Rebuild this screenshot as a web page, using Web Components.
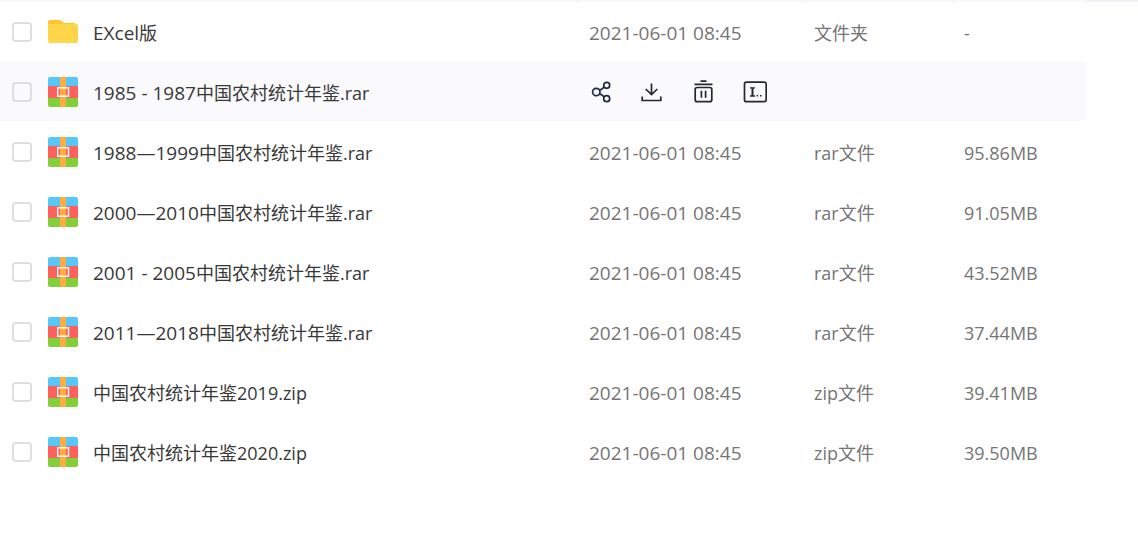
<!DOCTYPE html>
<html lang="zh-CN">
<head>
<meta charset="utf-8">
<title>文件列表</title>
<style>
body { margin: 0; background: #fff; font-family: "Open Sans", "Noto Sans CJK SC", sans-serif; font-size: 18px; line-height: 24px; color: #383838; }
</style>
</head>
<body>
<file-list></file-list>
<script>
class BaseElement extends HTMLElement {
  connectedCallback() {
    if (!this.shadowRoot) this.attachShadow({ mode: "open" }).innerHTML = this.render();
  }
}

class FileIcon extends BaseElement {
  render() {
    const folder = `<path d="M0 5V2a2 2 0 0 1 2-2h9c3 0 3 3 6 3h10v5H0z" fill="#ffc62b"/>
      <path d="M0 4h28a2 2 0 0 1 2 2v15a2 2 0 0 1-2 2H2a2 2 0 0 1-2-2z" fill="#ffd64a"/>`;
    const archive = `<path d="M2 0h26a2 2 0 0 1 2 2v7H0V2a2 2 0 0 1 2-2z" fill="#56c7f8"/>
      <path d="M0 9h30v12H0z" fill="#ff605c"/>
      <path d="M0 21h30v7a2 2 0 0 1-2 2H2a2 2 0 0 1-2-2z" fill="#82cf3a"/>
      <path d="M12 0h6v30h-6z" fill="#ffad41"/>
      <path d="M9.700 10.700h10.800v8.600H9.700z" fill="none" stroke="#fff" stroke-width="1.400"/>`;
    const isFolder = this.getAttribute("kind") === "folder";
    return `<style>:host{display:block;flex:none} svg{display:block}</style>
      <svg width="30" height="${isFolder ? 24 : 30}" viewBox="0 0 30 ${isFolder ? 24 : 30}" aria-hidden="true">${isFolder ? folder : archive}</svg>`;
  }
}
customElements.define("file-icon", FileIcon);

class RowActions extends BaseElement {
  render() {
    const icons = [
      ["分享", `<g stroke="#1d2b43"><circle cx="9.300" cy="12" r="3.700"/><circle cx="19.700" cy="5.300" r="3"/><circle cx="19.700" cy="18.700" r="3"/><path d="M12.500 9.700h1.600l3-2.600M12.500 14.300h1.600l3 2.600"/></g>`],
      ["下载", `<path d="M12.500 3.500v10.800M6.700 9l5.800 5.600L18.300 9M3.200 16.500v4h18.600v-4"/>`],
      ["删除", `<path d="M9.500 1.200h6M3.500 4.300h18" stroke-width="1.800"/><rect x="4.200" y="7.500" width="16.600" height="14.200" rx="2"/><path d="M10.400 10.800v7M14.600 10.800v7"/>`],
      ["重命名", `<rect x="1.500" y="2.200" width="21.700" height="19.500" rx="2"/><path d="M7 7.800h5M7 16h5" stroke-width="1.300"/><path d="M9.500 8v8" stroke-width="2"/><path d="M13.500 15.700h1.600M17 15.700h1.600" stroke-width="1.500"/>`]
    ];
    return `<style>
      :host{display:flex;gap:28px}
      button{border:0;padding:0;background:none;width:24px;height:24px;cursor:pointer}
      svg{display:block;fill:none;stroke:#25282e;stroke-width:1.700}
      </style>` + icons.map(([label, art]) =>
        `<button type="button" aria-label="${label}"><svg width="24" height="24" viewBox="0 0 24 24">${art}</svg></button>`).join("");
  }
}
customElements.define("row-actions", RowActions);

class FileName extends BaseElement {
  render() {
    return `<style>
      :host{display:flex;align-items:center;gap:15px;white-space:nowrap}
      div{padding-top:2px}
      ::slotted(span){font-size:19px}
      </style><file-icon kind="${this.getAttribute("kind")}"></file-icon><div><slot></slot></div>`;
  }
}
customElements.define("file-name", FileName);

class FileList extends BaseElement {
  render() {
    const files = [
      ["EXcel", "版", "文件夹", "-"],
      ["1985 - 1987", "中国农村统计年鉴.rar", "", "", true],
      ["1988—1999", "中国农村统计年鉴.rar", "rar文件", "95.86MB"],
      ["2000—2010", "中国农村统计年鉴.rar", "rar文件", "91.05MB"],
      ["2001 - 2005", "中国农村统计年鉴.rar", "rar文件", "43.52MB"],
      ["2011—2018", "中国农村统计年鉴.rar", "rar文件", "37.44MB"],
      ["", "中国农村统计年鉴2019.zip", "zip文件", "39.41MB"],
      ["", "中国农村统计年鉴2020.zip", "zip文件", "39.50MB"]
    ];
    const rows = files.map(([latin, name, type, size, active], i) => `
      <tr${active ? ' class="active"' : ""}>
        <td class="check"><input type="checkbox" aria-label="${latin + name}"></td>
        <td><file-name kind="${i ? "archive" : "folder"}">${latin ? `<span>${latin}</span>` : ""}${name}</file-name></td>
        ${active ? '<td class="tools" colspan="3"><row-actions></row-actions></td>'
          : `<td class="meta date">2021-06-01 08:45</td><td class="meta">${type}</td><td class="meta">${size}</td>`}
      </tr>`).join("");
    return `<style>
      :host{display:block}
      .edge{display:grid;grid-template-columns:1fr 225px 150px 134px 52px;height:2px;background:#f8f8fa}
      .edge i+i{border-left:1px solid #eeeef2}
      .edge i:last-child{background:#f0f0f6;border:0}
      .body{padding-right:52px}
      table{width:100%;border-collapse:separate;border-spacing:0;table-layout:fixed}
      .c-check{width:48px}.c-date{width:225px}.c-type{width:150px}.c-size{width:134px}
      td{box-sizing:border-box;height:60px;padding:0;border-bottom:1px solid #fff;vertical-align:middle;white-space:nowrap}
      .active td{background:#fafafc}
      td.check{padding-left:12px}
      input{appearance:none;display:block;box-sizing:border-box;width:20px;height:20px;margin:0;border:2px solid #dfdfdf;border-radius:4px;background:#fff}
      .active input{background:#fafafc}
      td.meta{padding:2px 0 0 12px;color:#757575}
      .date{font-size:19px}
      td.tools{padding-left:10px}
      </style>
      <div class="edge"><i></i><i></i><i></i><i></i><i></i></div>
      <div class="body"><table aria-label="文件列表">
        <colgroup><col class="c-check"><col><col class="c-date"><col class="c-type"><col class="c-size"></colgroup>
        <tbody>${rows}</tbody>
      </table></div>`;
  }
}
customElements.define("file-list", FileList);
</script>
</body>
</html>
